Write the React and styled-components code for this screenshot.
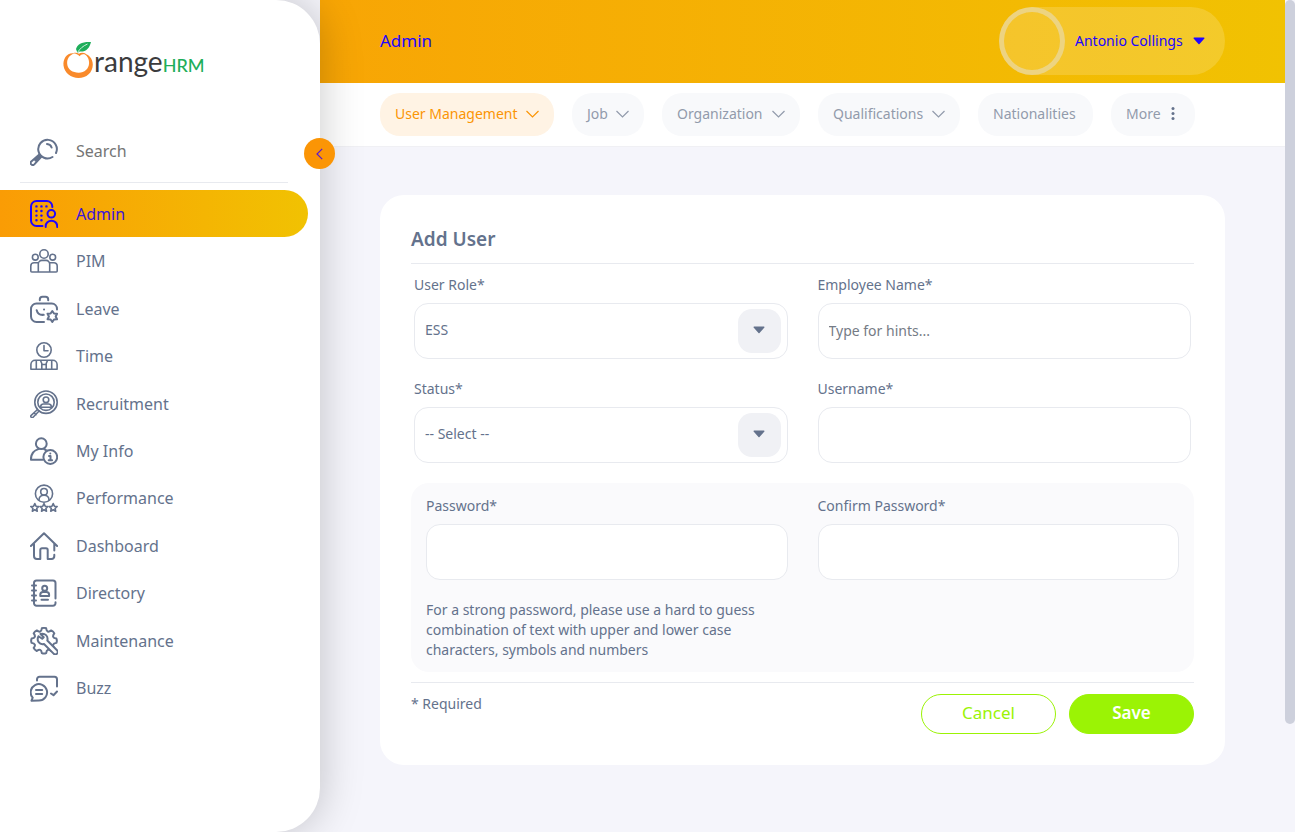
import React from "react";
import styled, { createGlobalStyle, css } from "styled-components";

const slate = "#64728c";
const link = "#2106ff";
const orange = "#fb9505";
const lime = "#9bf305";
const line = "#e8eaef";

const GlobalStyle = createGlobalStyle`
  *, *::before, *::after { box-sizing: border-box; }
  body {
    margin: 0;
    background: #f5f5fb;
    color: ${slate};
    font-family: "Noto Sans", "Open Sans", sans-serif;
    font-size: 14px;
    line-height: 20px;
  }
  button, input, select { font: inherit; color: inherit; }
  a { text-decoration: none; }
`;

const Page = styled.div`
  display: grid;
  grid-template-columns: 320px minmax(0, 1fr) 10px;
  min-height: 100vh;
`;

const Sidebar = styled.aside`
  position: relative;
  z-index: 2;
  background: #fff;
  border-radius: 0 44px 44px 0;
  box-shadow: 0 0 44px rgba(0, 0, 0, 0.22);
  padding: 41px 12px 48px 0;
`;

const Logo = styled.a`
  display: flex;
  width: 144px;
  height: 40px;
  margin-left: 62px;
  svg { flex: none; }
`;

const LogoText = styled.span`
  color: #3b3b3d;
  font-family: Lato, sans-serif;
  font-size: 28px;
  line-height: 40px;
`;

const LogoSuffix = styled.span`
  color: #1eae5a;
  font-size: 18px;
  font-weight: 500;
`;

const CollapseButton = styled.button`
  position: absolute;
  top: 138px;
  right: -15px;
  display: grid;
  place-items: center;
  width: 31px;
  height: 31px;
  padding: 0;
  border: 0;
  border-radius: 50%;
  background: ${orange};
  color: #5a1ad0;
`;

const SearchBox = styled.label`
  display: flex;
  align-items: center;
  gap: 18px;
  height: 62px;
  margin: 40px 20px 7px;
  padding-left: 10px;
  border-bottom: 1px solid ${line};
  svg { flex: none; }
`;

const SearchInput = styled.input`
  flex: 1;
  min-width: 0;
  padding: 0 0 2px;
  border: 0;
  outline: 0;
  background: none;
  font-size: 16px;
  &::placeholder { color: #757575; opacity: 1; }
`;

const Menu = styled.ul`
  display: grid;
  grid-auto-rows: 1fr;
  height: 522px;
  margin: 0;
  padding: 0;
  list-style: none;
`;

const MenuLink = styled.a`
  display: flex;
  align-items: center;
  gap: 18px;
  height: 100%;
  padding-left: 30px;
  border-radius: 0 24px 24px 0;
  color: ${(p) => (p.$active ? link : slate)};
  font-size: 16px;
  ${(p) => p.$active && css`
    background: linear-gradient(90deg, #fa9c05, #f1c202);
  `}
`;

const MenuText = styled.span`
  color: ${(p) => (p.$active ? "#3a15d8" : "inherit")};
`;

const Content = styled.div`
  min-width: 0;
`;

const Header = styled.header`
  display: flex;
  align-items: center;
  justify-content: space-between;
  height: 83px;
  padding: 0 60px 1px;
  background: linear-gradient(90deg, #f8a505, #f1c202);
`;

const PageTitle = styled.h1`
  margin: 0;
  color: ${link};
  font-size: 17px;
  font-weight: 400;
`;

const UserButton = styled.button`
  display: flex;
  align-items: center;
  min-width: 226px;
  height: 68px;
  padding: 0 20px 0 0;
  border: 0;
  border-radius: 34px;
  background: rgba(255, 255, 255, 0.16);
  color: ${link};
`;

const Avatar = styled.span`
  width: 66px;
  height: 68px;
  margin-right: 10px;
  border: 5px solid rgba(230, 225, 215, 0.5);
  border-radius: 50%;
`;

const UserName = styled.span`
  flex: 1;
  margin-right: 6px;
  text-align: left;
`;

const Tabs = styled.nav`
  display: flex;
  gap: 18px;
  height: 64px;
  padding: 10px 60px;
  background: #fff;
  border-bottom: 1px solid #f0f0f4;
`;

const Tab = styled.button`
  display: flex;
  align-items: center;
  justify-content: space-between;
  width: ${(p) => p.$width}px;
  height: 43px;
  padding: 0 15px 2px;
  border: 0;
  border-radius: 20px;
  background: ${(p) => (p.$active ? "#fff3e4" : "#f8f9fb")};
  color: ${(p) => (p.$active ? orange : "#929bab")};
  white-space: nowrap;
`;

const Card = styled.main`
  margin: 48px 60px 66px;
  padding: 32px 31px 31px;
  border-radius: 24px;
  background: #fff;
`;

const CardTitle = styled.h2`
  margin: 0;
  padding-bottom: 12px;
  border-bottom: 1px solid ${line};
  font-size: 19px;
  line-height: 24px;
  font-weight: 600;
`;

const FieldGrid = styled.div`
  display: grid;
  grid-template-columns: 1fr 1fr;
  gap: 20px 30px;
  padding: 11px 3px 20px;
`;

const PasswordPanel = styled(FieldGrid)`
  padding: 13px 15px 12px;
  border-radius: 18px;
  background: #fafafc;
`;

const Field = styled.div`
  display: flex;
  flex-direction: column;
  gap: 8px;
`;

const control = css`
  display: block;
  width: 100%;
  height: 56px;
  padding: 0 10px 2px;
  border: 1px solid ${line};
  border-radius: 14px;
  background: #fff;
  outline: 0;
`;

const TextInput = styled.input`
  ${control}
  &::placeholder { color: #757b85; opacity: 1; }
`;

const SelectWrap = styled.div`
  position: relative;
`;

const Select = styled.select`
  ${control}
  appearance: none;
`;

const SelectArrow = styled.span`
  position: absolute;
  top: 6px;
  right: 7px;
  display: grid;
  place-items: center;
  width: 43px;
  height: 44px;
  padding-bottom: 3px;
  border-radius: 14px;
  background: #f0f1f5;
  pointer-events: none;
`;

const Hint = styled.p`
  margin: 0;
`;

const CardFooter = styled.footer`
  display: flex;
  gap: 13px;
  margin-top: 10px;
  padding-top: 11px;
  border-top: 1px solid ${line};
`;

const Required = styled.p`
  flex: 1;
  margin: 0;
`;

const ActionButton = styled.button`
  width: ${(p) => (p.$primary ? 125 : 135)}px;
  height: 40px;
  padding: 0 0 2px;
  border: 1px solid ${lime};
  border-radius: 20px;
  background: ${(p) => (p.$primary ? lime : "#fff")};
  color: ${(p) => (p.$primary ? "#fff" : lime)};
  font-size: 17px;
  font-weight: ${(p) => (p.$primary ? 600 : 400)};
`;

const ScrollRail = styled.div`
  background: #f5f5fb;
`;

const ScrollThumb = styled.div`
  height: 87%;
  border-radius: 5px;
  background: #cdd0dc;
`;

function toothPath(cx, cy, outer, inner, teeth) {
  const step = (Math.PI * 2) / teeth;
  const at = (r, a) => `${(cx + r * Math.cos(a)).toFixed(2)} ${(cy + r * Math.sin(a)).toFixed(2)}`;
  let d = "";
  for (let i = 0; i < teeth; i += 1) {
    const a = i * step - Math.PI / 2;
    d += `${i ? "L" : "M"}${at(outer, a - step * 0.22)}`;
    d += `Q${at(outer + 0.7, a)} ${at(outer, a + step * 0.22)}`;
    d += `Q${at(inner - 1.4, a + step * 0.5)} ${at(outer, a + step * 0.78)}`;
  }
  return `${d}Z`;
}

function starPath(cx, cy, outer, inner, points = 5) {
  let d = "";
  for (let i = 0; i < points * 2; i += 1) {
    const r = i % 2 ? inner : outer;
    const a = (i * Math.PI) / points - Math.PI / 2;
    d += `${i ? "L" : "M"}${(cx + r * Math.cos(a)).toFixed(2)} ${(cy + r * Math.sin(a)).toFixed(2)}`;
  }
  return `${d}Z`;
}

const icons = {
  search: (
    <>
      <path d="M26 15A9.3 9.3 0 1 0 22.5 19M17 6c2.5.2 4 1.500 4.600 3.600" />
      <path d="M11.500 18.600 4.300 26.400a2.100 2.100 0 0 1-3-3L9.300 16.400zM9.500 18.500l-4 4" />
    </>
  ),
  admin: (
    <>
      <path d="M22.300 7V6.500A5.500 5.500 0 0 0 16.800 1H6.500A5.500 5.500 0 0 0 1 6.500v14A5.500 5.500 0 0 0 6.500 26h6M15.700 27v-1a5.700 5.300 0 0 1 11.500 0v1" />
      <circle cx="21.300" cy="13.800" r="3.800" />
      <path strokeWidth="2.400" d="M6.400 6.400h.1M11.400 6.400h.1M16.400 6.400h.1M6.400 11h.1M11.400 11h.1M6.400 15.600h.1M11.400 15.600h.1M6.400 20.200h.1M11.400 20.200h.1" />
    </>
  ),
  pim: (
    <g strokeWidth="1.600">
      <circle cx="14" cy="7" r="4.200" />
      <circle cx="5.300" cy="10.200" r="2.900" />
      <circle cx="22.700" cy="10.200" r="2.900" />
      <path d="M8.300 25V17a3.600 3.600 0 0 1 3.600-3.600h4.200a3.600 3.600 0 0 1 3.600 3.600v8M8.300 15.700H4a3.200 3.200 0 0 0-3.200 3.200V24a1 1 0 0 0 1 1h24.400a1 1 0 0 0 1-1v-5.100a3.200 3.200 0 0 0-3.200-3.200h-4.300" />
    </g>
  ),
  leave: (
    <>
      <path d="M9.800 5.200V4.500A2.700 2.700 0 0 1 12.500 1.800h3a2.700 2.700 0 0 1 2.700 2.700v.7M27 14.500v-.5A5.500 5.500 0 0 0 21.700 8.500H6.500A5.500 5.500 0 0 0 1 14v7.500A5.500 5.500 0 0 0 6.500 27H14M6.700 15.200c.8 3.300 3.500 5 7 4.600M14 14.500h.1" />
      <path d={starPath(22.300, 21.500, 5.500, 3.400, 6)} />
      <circle cx="22.300" cy="21.500" r="1.600" fill="#fff" stroke="none" />
    </>
  ),
  time: (
    <g strokeWidth="1.600">
      <circle cx="14" cy="8" r="7.200" />
      <path d="M14 3.500v5.200h4M.9 27.200v-4.700a4.300 4.300 0 0 1 4.300-4.300h17.600a4.300 4.300 0 0 1 4.300 4.300v4.700zM6.300 18.500v8.500M21.700 18.500v8.500M10.500 18.500l1.300 3v5.500M17.500 18.500l-1.300 3v5.500M11.800 22.500h4.400" />
    </g>
  ),
  recruitment: (
    <g strokeWidth="1.600">
      <circle cx="16" cy="12.200" r="11.200" />
      <circle cx="16" cy="12.200" r="8.200" />
      <circle cx="16" cy="9.800" r="2.800" />
      <path d="M10.700 17.200v-1a2.700 2.700 0 0 1 2.700-2.200h5.200a2.700 2.700 0 0 1 2.700 2.200v1zM7.500 19.500 1.200 25.300a1.300 1.300 0 0 0 1.900 1.900l6-6.200M4 22.700l2 2" />
    </g>
  ),
  info: (
    <g>
      <circle cx="11.300" cy="6.700" r="5.400" />
      <path d="M12.700 22.800H.9c0-5 2.700-9.300 7.500-10.700M14.500 12.300l1.300.7" />
      <circle cx="20.300" cy="20" r="6.900" />
      <path d="M20.300 16.500v.1M19 19h1.500v4M18.700 23.300h3.400" />
    </g>
  ),
  performance: (
    <g strokeWidth="1.600">
      <circle cx="14" cy="9.700" r="8.600" />
      <circle cx="14" cy="7.800" r="3.300" />
      <path d="M9 16.300c0-3.300 2-5 5-5s5 1.700 5 5" />
      <path d={starPath(4.800, 23.800, 4.200, 2)} />
      <path d={starPath(14, 23.800, 4.200, 2)} />
      <path d={starPath(23.200, 23.800, 4.200, 2)} />
    </g>
  ),
  dashboard: (
    <path d="M.9 14 14 1.300 27.100 14M4 12v12a3 3 0 0 0 3 3h3.300V18a1.700 1.700 0 0 1 1.700-1.700h4a1.700 1.700 0 0 1 1.700 1.700v9H21.500a3 3 0 0 0 2.800-3v-1.300M24.300 11.500v7" />
  ),
  directory: (
    <>
      <path d="M25.500 19.500V4a2.500 2.500 0 0 0-2.500-2.500H6.500A2.500 2.500 0 0 0 4 4v20.300A2.500 2.500 0 0 0 6.500 26.800H23a2.500 2.500 0 0 0 2.500-2.500v-1M2 6.500h4M2 11.500h4M2 16.500h4M2 21.500h4M11.500 20.800h6.500" />
      <circle cx="14.700" cy="9.300" r="2.500" />
      <path d="M10.300 17v-1.500c0-1.600 1.200-2.500 2.700-2.500h3.400c1.500 0 2.700.9 2.700 2.500V17z" />
    </>
  ),
  maintenance: (
    <>
      <path d={toothPath(14, 13.700, 12.600, 9, 8)} />
      <path fill="#fff" d="M8.500 9.200l3.700 2.600 1.500-1.600L10.500 7c4.500-1.300 8 2.200 6.800 6.500L27 23.200a2.300 2.300 0 0 1-3.400 3.400L14 17c-4.700 1-7.800-3.300-5.500-7.800z" />
    </>
  ),
  buzz: (
    <>
      <path d="M7 6.500V5.300a2.500 2.500 0 0 1 2.500-2.500h15a2.500 2.500 0 0 1 2.500 2.500V12.500M21 19.500l2.500 1.700 3.500-3.700" />
      <path d="M9 26.500A8.200 8.200 0 1 0 2.700 23.700L1.500 26.700zM6 16h6.200M6 20h6.200" />
    </>
  ),
};

function Icon({ name }) {
  return (
    <svg width="28" height="28" viewBox="0 0 28 28" fill="none" stroke="currentColor" strokeWidth="2" strokeLinecap="round" strokeLinejoin="round" aria-hidden="true">
      {icons[name]}
    </svg>
  );
}

function Chevron() {
  return (
    <svg width="13" height="8" viewBox="0 0 13 8" fill="none" stroke="currentColor" strokeWidth="1.200" aria-hidden="true">
      <path d="M.5 1 6.500 7l6-6" />
    </svg>
  );
}

function Caret() {
  return (
    <svg width="12" height="8" viewBox="0 0 12 8" fill="currentColor" aria-hidden="true">
      <path d="M1 .5h10a.6.6 0 0 1 .4 1L6.500 7a.7.7 0 0 1-1 0L.6 1.500a.6.6 0 0 1 .4-1z" />
    </svg>
  );
}

function More() {
  return (
    <svg width="12" height="13" viewBox="0 0 12 13" fill={slate} aria-hidden="true">
      <circle cx="5" cy="1.600" r="1.500" />
      <circle cx="5" cy="6.500" r="1.500" />
      <circle cx="5" cy="11.400" r="1.500" />
    </svg>
  );
}

const menu = [
  ["admin", "Admin"],
  ["pim", "PIM"],
  ["leave", "Leave"],
  ["time", "Time"],
  ["recruitment", "Recruitment"],
  ["info", "My Info"],
  ["performance", "Performance"],
  ["dashboard", "Dashboard"],
  ["directory", "Directory"],
  ["maintenance", "Maintenance"],
  ["buzz", "Buzz"],
];

const tabs = [
  { label: "User Management", width: 174, icon: <Chevron />, active: true },
  { label: "Job", width: 72, icon: <Chevron /> },
  { label: "Organization", width: 138, icon: <Chevron /> },
  { label: "Qualifications", width: 142, icon: <Chevron /> },
  { label: "Nationalities", width: 115 },
  { label: "More", width: 84, icon: <More /> },
];

function SelectField({ id, label, options }) {
  return (
    <Field>
      <label htmlFor={id}>{label}</label>
      <SelectWrap>
        <Select id={id}>
          {options.map((option) => <option key={option}>{option}</option>)}
        </Select>
        <SelectArrow><Caret /></SelectArrow>
      </SelectWrap>
    </Field>
  );
}

function TextField({ id, label, type = "text", placeholder }) {
  return (
    <Field>
      <label htmlFor={id}>{label}</label>
      <TextInput id={id} type={type} placeholder={placeholder} />
    </Field>
  );
}

export default function App() {
  return (
    <>
      <GlobalStyle />
      <Page>
        <Sidebar>
          <Logo href="#">
            <svg width="32" height="38" viewBox="0 0 32 38" aria-hidden="true">
              <path fill="#f98a2b" d="M12.500 12.300C5 11 .8 17.500 1.500 24.500 2.400 32 9 37 16.500 37c8 0 14.200-5.500 14.300-13.300.1-6.200-4.200-10.900-9.800-11.200 4 1.600 6.300 5.200 6.100 9.500-.3 6-4.600 9.600-10.300 9.700C11 31.800 5.700 28.500 5.200 23c-.4-5.300 2.300-8.800 7.300-10.700z" />
              <path fill="#f98a2b" d="M11 12.300c3 .2 5 1.200 6.500 2.900 1.500-1.600 3.800-2.600 6.500-2.100-2.400-1.700-5.200-1.700-7-.3-1.600-1.100-3.700-1.300-6-.5z" />
              <path fill="#1eae5a" d="M14 8C15.500 3 20 .6 29 1c-1.500 6.500-5.500 10.300-11.500 9.500L15.500 12z" />
              <path fill="none" stroke="#fff" strokeWidth=".8" d="M15.500 11.500C18 7.500 21 5 25.500 3" />
            </svg>
            <LogoText>range<LogoSuffix>HRM</LogoSuffix></LogoText>
          </Logo>
          <CollapseButton aria-label="Collapse menu">
            <svg width="7" height="12" viewBox="0 0 7 12" fill="none" stroke="currentColor" strokeWidth="1.200" aria-hidden="true">
              <path d="M6.200.8 1 6l5.200 5.200" />
            </svg>
          </CollapseButton>
          <SearchBox>
            <Icon name="search" />
            <SearchInput type="text" placeholder="Search" aria-label="Search" />
          </SearchBox>
          <nav>
            <Menu>
              {menu.map(([name, label]) => (
                <li key={name}>
                  <MenuLink href="#" $active={name === "admin"}>
                    <Icon name={name} />
                    <MenuText $active={name === "admin"}>{label}</MenuText>
                  </MenuLink>
                </li>
              ))}
            </Menu>
          </nav>
        </Sidebar>
        <Content>
          <Header>
            <PageTitle>Admin</PageTitle>
            <UserButton>
              <Avatar />
              <UserName>Antonio Collings</UserName>
              <Caret />
            </UserButton>
          </Header>
          <Tabs>
            {tabs.map((tab) => (
              <Tab key={tab.label} $width={tab.width} $active={tab.active}>
                {tab.label}
                {tab.icon}
              </Tab>
            ))}
          </Tabs>
          <Card>
            <CardTitle>Add User</CardTitle>
            <form>
              <FieldGrid>
                <SelectField id="role" label="User Role*" options={["ESS", "Admin"]} />
                <TextField id="employee" label="Employee Name*" placeholder="Type for hints..." />
                <SelectField id="status" label="Status*" options={["-- Select --", "Enabled", "Disabled"]} />
                <TextField id="username" label="Username*" />
              </FieldGrid>
              <PasswordPanel>
                <TextField id="password" label="Password*" type="password" />
                <TextField id="confirm" label="Confirm Password*" type="password" />
                <Hint>
                  For a strong password, please use a hard to guess combination of text with upper and lower case characters, symbols and numbers
                </Hint>
              </PasswordPanel>
              <CardFooter>
                <Required>* Required</Required>
                <ActionButton type="button">Cancel</ActionButton>
                <ActionButton type="submit" $primary>Save</ActionButton>
              </CardFooter>
            </form>
          </Card>
        </Content>
        <ScrollRail>
          <ScrollThumb />
        </ScrollRail>
      </Page>
    </>
  );
}
